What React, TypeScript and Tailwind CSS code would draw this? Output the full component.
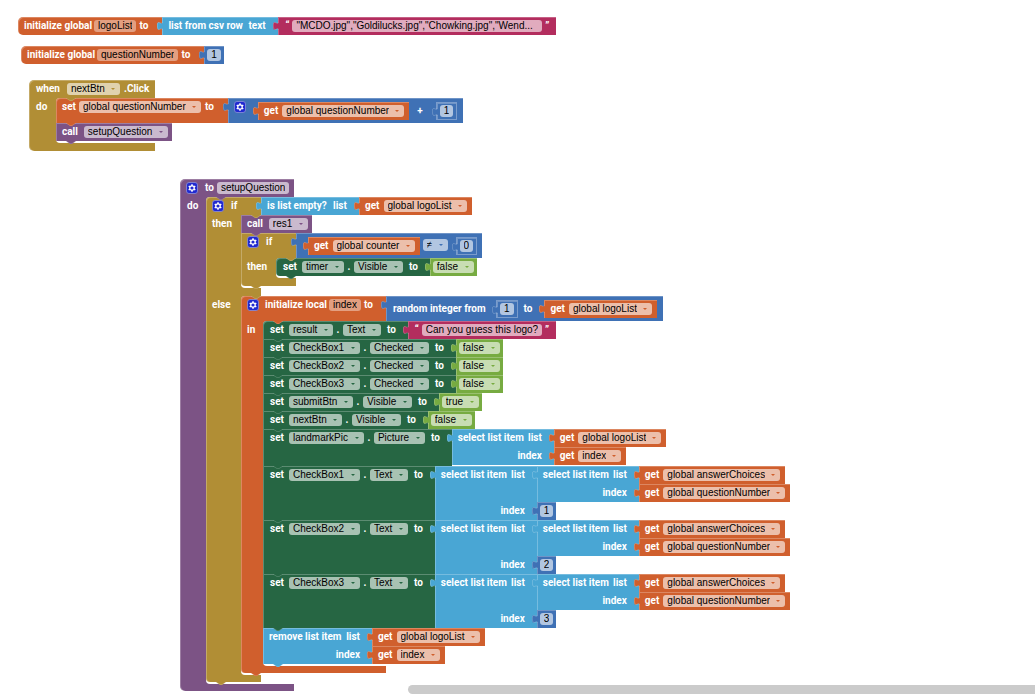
import type { ReactNode } from "react"
import clsx from "clsx"

type Color = "orange" | "gold" | "purple" | "green" | "lime" | "sky" | "blue" | "pink"

const BG: Record<Color, string> = {
    orange: "bg-[#d05f2d]",
    gold: "bg-[#b18e35]",
    purple: "bg-[#7c5385]",
    green: "bg-[#266643]",
    lime: "bg-[#77ab41]",
    sky: "bg-[#49a6d4]",
    blue: "bg-[#3f71b5]",
    pink: "bg-[#b32d5e]",
}

const TEXT: Record<Color, string> = {
    orange: "text-[#d05f2d]",
    gold: "text-[#b18e35]",
    purple: "text-[#7c5385]",
    green: "text-[#266643]",
    lime: "text-[#77ab41]",
    sky: "text-[#49a6d4]",
    blue: "text-[#3f71b5]",
    pink: "text-[#b32d5e]",
}

const EDGE = "shadow-[inset_1px_1px_0_rgba(255,255,255,0.25)]"

function Word({ children, className }: { children: ReactNode; className?: string }) {
    return (
        <span className={clsx("block shrink-0 font-[Roboto,sans-serif] text-[10px] leading-[17px] font-bold whitespace-pre text-white", className)}>
            {children}
        </span>
    )
}

function Gear({ className }: { className?: string }) {
    return (
        <button aria-label="Edit block" className={clsx("mt-[3px] h-3 w-3 shrink-0 cursor-pointer", className)}>
            <svg viewBox="0 0 12 12" className="h-3 w-3">
                <rect x="0.5" y="0.5" width="11" height="11" rx="2.5" fill="#2029d0" stroke="#8d90d8" strokeWidth="0.8" />
                <g stroke="#fff" strokeWidth="1.5">
                    <path d="M6 2.2v7.6M2.7 4.1l6.6 3.8M9.3 4.1L2.7 7.9" />
                </g>
                <circle cx="6" cy="6" r="2.8" fill="#fff" />
                <circle cx="6" cy="6" r="1.6" fill="#2029d0" />
            </svg>
        </button>
    )
}

function Dropdown({ value, color }: { value: string; color: Color }) {
    return (
        <span className="relative mt-[3px] flex h-3 shrink-0">
            <select
                aria-label={value}
                className="h-3 cursor-pointer appearance-none rounded-[3px] bg-white/60 pr-[15px] pl-1 text-[10px] leading-3 text-black"
            >
                <option>{value}</option>
            </select>
            <svg viewBox="0 0 4 2" className={clsx("pointer-events-none absolute top-[5px] right-[5px] h-[2px] w-1", TEXT[color])}>
                <path d="M0 0h4L2 2z" fill="currentColor" />
            </svg>
        </span>
    )
}

function Field({ value, label, className }: { value: string; label: string; className?: string }) {
    return (
        <input
            aria-label={label}
            defaultValue={value}
            className={clsx(
                "mt-[3px] field-sizing-content h-3 shrink-0 rounded-[3px] px-1 text-[10px] leading-3 text-black",
                className ?? "bg-white/60",
            )}
        />
    )
}

// the bump that hangs under a statement
function Notch({ color, className }: { color: Color; className?: string }) {
    return (
        <svg viewBox="0 0 10 3" className={clsx("absolute z-10 h-[3px] w-[10px]", TEXT[color], className ?? "top-full left-[10px]")}>
            <path d="M0 0L4 3H6L10 0z" fill="currentColor" />
            <path d="M0 0L4 2.6H6L10 0" fill="none" stroke="#fff" strokeOpacity="0.3" strokeWidth="0.6" />
        </svg>
    )
}

// the puzzle tab on the left of a value
function Tab({ color }: { color: Color }) {
    return (
        <svg viewBox="0 0 6 10" className={clsx("absolute top-1 -left-[5px] h-[10px] w-[6px]", TEXT[color])}>
            <path d="M6 0C6 7 0-4 0 5S6 3 6 10z" fill="currentColor" />
            <path d="M5 1.5C4 4 0-2 0.4 5S4 6 5.4 8.6" fill="none" stroke="#fff" strokeOpacity="0.3" strokeWidth="0.7" />
        </svg>
    )
}

function Value({ color, className, children }: { color: Color; className?: string; children: ReactNode }) {
    return (
        <div className={clsx("relative flex shrink-0 items-start", BG[color], EDGE, className)}>
            <Tab color={color} />
            {children}
        </div>
    )
}

function Get({ name, className }: { name: string; className?: string }) {
    return (
        <Value color="orange" className={clsx("h-[18px] pr-[5px] pl-[6px]", className)}>
            <Word className="mr-1">get</Word>
            <Dropdown value={name} color="orange" />
        </Value>
    )
}

function Num({ value }: { value: string }) {
    return (
        <Value color="blue" className="h-[18px] px-[3px]">
            <Field label="number" value={value} />
        </Value>
    )
}

// a number plugged into an inline socket
function InlineNum({ value }: { value: string }) {
    return (
        <Value color="blue" className="h-[18px] border border-[#7a9ccc] px-[3px] [&>input]:mt-[2px]">
            <Field label="number" value={value} />
        </Value>
    )
}

function Bool({ value }: { value: string }) {
    return (
        <Value color="lime" className="h-[18px] px-[3px]">
            <Dropdown value={value} color="lime" />
        </Value>
    )
}

function Str({ value, className }: { value: string; className?: string }) {
    return (
        <Value color="pink" className="h-[18px] px-[7px]">
            <Word className="w-[7px]">“</Word>
            <Field label="text" value={value} className={clsx("bg-white/60", className)} />
            <Word className="w-[7px] text-right">”</Word>
        </Value>
    )
}

// block with stacked list / index inputs
function ListCells({ title, className, list, index }: { title: string; className: string; list: ReactNode; index: ReactNode }) {
    return (
        <div className="flex flex-col items-start">
            <div className="flex items-stretch">
                <div className={clsx("flex shrink-0 justify-between pr-3 pl-[6px]", BG.sky, EDGE, className)}>
                    <Word>{title}</Word>
                    <Word>list</Word>
                </div>
                {list}
            </div>
            <div className="flex items-stretch">
                <div className={clsx("flex shrink-0 justify-end pr-3 shadow-[inset_1px_0_0_rgba(255,255,255,0.25)]", BG.sky, className)}>
                    <Word>index</Word>
                </div>
                {index}
            </div>
        </div>
    )
}

function SelectItem({ list, index }: { list: ReactNode; index: ReactNode }) {
    return (
        <div className="relative">
            <Tab color="sky" />
            <ListCells title="select list item" className="w-[102px]" list={list} index={index} />
        </div>
    )
}

function Statement({ color, className, children, value }: { color: Color; className?: string; children: ReactNode; value?: ReactNode }) {
    return (
        <div className="relative flex items-stretch">
            <div className={clsx("flex shrink-0 items-start pl-[6px]", BG[color], EDGE, className)}>{children}</div>
            {value}
            <Notch color={color} />
        </div>
    )
}

function SetProp({ component, prop, value, className }: { component: string; prop: string; value: ReactNode; className?: string }) {
    return (
        <Statement color="green" value={value} className={className}>
            <Word className="mr-[5px] ml-px">set</Word>
            <Dropdown value={component} color="green" />
            <Word className="w-[10px] text-center">.</Word>
            <Dropdown value={prop} color="green" />
            <Word className="mr-3 ml-[6px]">to</Word>
        </Statement>
    )
}

function Call({ name }: { name: string }) {
    return (
        <Statement color="purple" className="h-[18px] pr-1">
            <Word className="mr-[6px]">call</Word>
            <Dropdown value={name} color="purple" />
        </Statement>
    )
}

// one mouth of a C shaped block
function Mouth({ color, label, arm, children }: { color: Color; label: string; arm: string; children: ReactNode }) {
    return (
        <div className={clsx("relative flex w-fit items-stretch", BG[color])}>
            <div className={clsx("shrink-0 shadow-[inset_1px_0_0_rgba(255,255,255,0.25)]", arm)}>
                <Word>{label}</Word>
            </div>
            <div className="relative flex flex-col items-start rounded-l-[4px] bg-white pb-[2px]">
                <Notch color={color} className="top-0 left-[10px]" />
                {children}
            </div>
        </div>
    )
}

function Foot({ color, className }: { color: Color; className: string }) {
    return (
        <div className={clsx("relative shadow-[inset_1px_0_0_rgba(255,255,255,0.25)]", BG[color], className)}>
            {color !== "purple" && <Notch color={color} />}
        </div>
    )
}

const flags = [
    { component: "CheckBox1", prop: "Checked", value: "false" },
    { component: "CheckBox2", prop: "Checked", value: "false" },
    { component: "CheckBox3", prop: "Checked", value: "false" },
    { component: "submitBtn", prop: "Visible", value: "true" },
    { component: "nextBtn", prop: "Visible", value: "false" },
]

function Global({ name, value, className }: { name: string; value: ReactNode; className: string }) {
    return (
        <div className={clsx("flex items-start", className)}>
            <div className={clsx("flex h-[18px] rounded-l-[5px] pl-[6px]", BG.orange, EDGE)}>
                <Word className="w-[70px]">initialize global</Word>
                <Field label="variable name" value={name} className="bg-white/40" />
                <Word className="mr-[14px] ml-[3px]">to</Word>
            </div>
            {value}
        </div>
    )
}

function Globals() {
    return (
        <>
            <Global
                name="logoList"
                className="ml-[18px]"
                value={
                    <>
                        <Value color="sky" className="h-[18px] pl-[6px]">
                            <Word className="w-[80px]">list from csv row</Word>
                            <Word className="w-[30px]">text</Word>
                        </Value>
                        <Str value={'"MCDO.jpg","Goldilucks.jpg","Chowking.jpg","Wend...'} className="min-w-[250px]" />
                    </>
                }
            />
            <Global name="questionNumber" className="mt-[11px] ml-[21px]" value={<Num value="1" />} />
        </>
    )
}

function ClickHandler() {
    return (
        <div className="mt-4 ml-[29px] w-fit">
            <div className={clsx("flex h-[18px] w-[126px] rounded-tl-[5px] pl-[7px]", BG.gold, EDGE)}>
                <Word className="w-[31px]">when</Word>
                <Dropdown value="nextBtn" color="gold" />
                <Word className="ml-1">.Click</Word>
            </div>
            <Mouth color="gold" label="do" arm="w-[27px] pl-[7px]">
                <Statement
                    color="orange"
                    className="rounded-tl-[4px]"
                    value={
                        <Value color="blue" className="h-[25px] pr-[6px] pl-[6px]">
                            <Gear className="mr-3" />
                            <Get name="global questionNumber" className="mt-1" />
                            <Word className="mt-1 mr-[13px] ml-[8px]">+</Word>
                            <div className="mt-1">
                                <InlineNum value="1" />
                            </div>
                        </Value>
                    }
                >
                    <Word className="mr-[3px]">set</Word>
                    <Dropdown value="global questionNumber" color="orange" />
                    <Word className="mr-[14px] ml-1">to</Word>
                </Statement>
                <Call name="setupQuestion" />
            </Mouth>
            <Foot color="gold" className="h-2 w-[126px] rounded-bl-[5px] [&>svg]:hidden" />
        </div>
    )
}

function CounterCheck() {
    return (
        <div className="relative">
            <div className="flex">
                <div className={clsx("flex h-[25px] w-[55px] pl-[6px]", BG.gold, EDGE)}>
                    <Gear className="mr-[7px]" />
                    <Word>if</Word>
                </div>
                <Value color="blue" className="h-[25px] pr-[5px] pl-3">
                    <Get name="global counter" className="mt-[4px]" />
                    <div className="mt-[3px] mr-2 ml-[3px]">
                        <Dropdown value="≠" color="blue" />
                    </div>
                    <div className="mt-[4px]">
                        <InlineNum value="0" />
                    </div>
                </Value>
            </div>
            <Mouth color="gold" label="then" arm="w-[35px] pl-[6px]">
                <SetProp component="timer" prop="Visible" value={<Bool value="false" />} className="rounded-l-[4px]" />
            </Mouth>
            <Foot color="gold" className="h-2 w-[55px] rounded-bl-[4px]" />
        </div>
    )
}

function LocalIndex() {
    return (
        <div>
            <div className="flex">
                <div className={clsx("flex h-[25px] w-[145px] rounded-tl-[4px] pl-[6px]", BG.orange, EDGE)}>
                    <Gear className="mr-[6px]" />
                    <Word className="w-[64px]">initialize local</Word>
                    <Field label="variable name" value="index" className="bg-white/40" />
                    <Word className="ml-[3px]">to</Word>
                </div>
                <Value color="blue" className="h-[25px] pr-[6px] pl-[7px]">
                    <Word className="mt-1 w-[103px]">random integer from</Word>
                    <div className="mt-[4px]">
                        <InlineNum value="1" />
                    </div>
                    <Word className="mt-1 mr-3 ml-[6px]">to</Word>
                    <Get name="global logoList" className="mt-[4px]" />
                </Value>
            </div>
            <Mouth color="orange" label="in" arm="w-[22px] pl-[6px]">
                <SetProp component="result" prop="Text" value={<Str value="Can you guess this logo?" />} className="rounded-tl-[4px]" />
                {flags.map((f) => (
                    <SetProp key={f.component + f.prop} component={f.component} prop={f.prop} value={<Bool value={f.value} />} />
                ))}
                <SetProp
                    component="landmarkPic"
                    prop="Picture"
                    className="h-[37px]"
                    value={<SelectItem list={<Get name="global logoList" />} index={<Get name="index" />} />}
                />
                {["1", "2", "3"].map((n) => (
                    <SetProp
                        key={n}
                        component={"CheckBox" + n}
                        prop="Text"
                        value={
                            <SelectItem
                                list={
                                    <SelectItem
                                        list={<Get name="global answerChoices" />}
                                        index={<Get name="global questionNumber" />}
                                    />
                                }
                                index={<Num value={n} />}
                            />
                        }
                    />
                ))}
                <div className="relative">
                    <ListCells
                        title="remove list item"
                        className="w-[109px]"
                        list={<Get name="global logoList" />}
                        index={<Get name="index" />}
                    />
                    <Notch color="sky" />
                </div>
            </Mouth>
            <Foot color="orange" className="h-[7px] w-[145px] rounded-bl-[4px]" />
        </div>
    )
}

function SetupProcedure() {
    return (
        <div className="mt-7 ml-[180px] w-fit">
            <div className={clsx("flex h-[18px] w-[114px] rounded-tl-[5px] pl-[6px]", BG.purple, EDGE)}>
                <Gear className="mr-[7px]" />
                <Word className="mr-[3px]">to</Word>
                <Field label="procedure name" value="setupQuestion" />
            </div>
            <Mouth color="purple" label="do" arm="w-[26px] pl-[7px]">
                <div className="flex">
                    <div className={clsx("flex h-[18px] w-[55px] rounded-tl-[4px] pl-[6px]", BG.gold, EDGE)}>
                        <Gear className="mr-[7px]" />
                        <Word>if</Word>
                    </div>
                    <Value color="sky" className="h-[18px] pl-[6px]">
                        <Word className="w-[66px]">is list empty?</Word>
                        <Word className="w-[26px]">list</Word>
                    </Value>
                    <Get name="global logoList" />
                </div>
                <Mouth color="gold" label="then" arm="w-[35px] pl-[6px]">
                    <Call name="res1" />
                    <CounterCheck />
                </Mouth>
                <div className={clsx("h-2 w-[55px] shadow-[inset_1px_0_0_rgba(255,255,255,0.25)]", BG.gold)} />
                <Mouth color="gold" label="else" arm="w-[35px] pl-[6px]">
                    <LocalIndex />
                </Mouth>
                <Foot color="gold" className="h-[7px] w-[55px] rounded-bl-[4px]" />
            </Mouth>
            <Foot color="purple" className="h-[7px] w-[114px] rounded-bl-[5px]" />
        </div>
    )
}

function App() {
    return (
        <main className="relative min-h-screen overflow-hidden bg-white pt-[17px] pb-[3px] font-['Liberation_Sans',Arial,sans-serif]">
            <Globals />
            <ClickHandler />
            <SetupProcedure />
            <div className="absolute right-0 bottom-0 left-[408px] h-[9px] rounded-l-full bg-[#cbcbcb]" />
        </main>
    )
}

export default App
